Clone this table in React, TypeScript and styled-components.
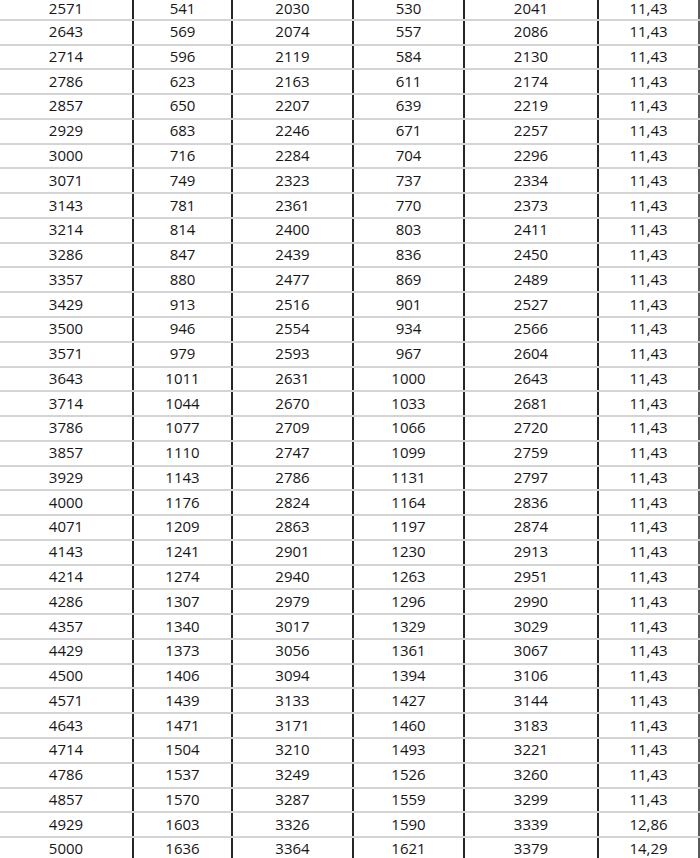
import React from "react";
import styled, { createGlobalStyle } from "styled-components";

const GlobalStyle = createGlobalStyle`
  html, body {
    margin: 0;
    padding: 0;
    background: #ffffff;
    overflow: hidden;
  }
  body {
    font-family: "Open Sans", "Noto Sans", "Liberation Sans", sans-serif;
  }
`;

const col1 = [2571, 2643, 2714, 2786, 2857, 2929, 3000, 3071, 3143, 3214, 3286, 3357, 3429, 3500, 3571, 3643, 3714, 3786, 3857, 3929, 4000, 4071, 4143, 4214, 4286, 4357, 4429, 4500, 4571, 4643, 4714, 4786, 4857, 4929, 5000];
const col2 = [541, 569, 596, 623, 650, 683, 716, 749, 781, 814, 847, 880, 913, 946, 979, 1011, 1044, 1077, 1110, 1143, 1176, 1209, 1241, 1274, 1307, 1340, 1373, 1406, 1439, 1471, 1504, 1537, 1570, 1603, 1636];
const col3 = [2030, 2074, 2119, 2163, 2207, 2246, 2284, 2323, 2361, 2400, 2439, 2477, 2516, 2554, 2593, 2631, 2670, 2709, 2747, 2786, 2824, 2863, 2901, 2940, 2979, 3017, 3056, 3094, 3133, 3171, 3210, 3249, 3287, 3326, 3364];
const col4 = [530, 557, 584, 611, 639, 671, 704, 737, 770, 803, 836, 869, 901, 934, 967, 1000, 1033, 1066, 1099, 1131, 1164, 1197, 1230, 1263, 1296, 1329, 1361, 1394, 1427, 1460, 1493, 1526, 1559, 1590, 1621];
const col5 = [2041, 2086, 2130, 2174, 2219, 2257, 2296, 2334, 2373, 2411, 2450, 2489, 2527, 2566, 2604, 2643, 2681, 2720, 2759, 2797, 2836, 2874, 2913, 2951, 2990, 3029, 3067, 3106, 3144, 3183, 3221, 3260, 3299, 3339, 3379];
const col6 = col1.map((_, i) => (i === 33 ? "12,86" : i === 34 ? "14,29" : "11,43"));

const rows = col1.map((_, i) => [
  String(col1[i]),
  String(col2[i]),
  String(col3[i]),
  String(col4[i]),
  String(col5[i]),
  col6[i],
]);

const Sheet = styled.div`
  display: flex;
  flex-direction: column;
  width: 700px;
`;

const Row = styled.div<{ $first?: boolean }>`
  display: grid;
  grid-template-columns: 134px 99px 121px 111px 134px 101px;
  height: ${(p) => (p.$first ? "20.8px" : "24.78px")};
  box-sizing: border-box;
  border-bottom: 2px solid #d4d4d4;
  flex: none;
`;

const Cell = styled.div<{ $last?: boolean }>`
  display: flex;
  align-items: center;
  justify-content: center;
  padding-bottom: 1px;
  box-sizing: border-box;
  border-right: 2px solid ${(p) => (p.$last ? "#5a5a5a" : "#262626")};
  font-size: 15px;
  color: #161616;
  line-height: 1;
  white-space: nowrap;
`;

export default function App() {
  return (
    <>
      <GlobalStyle />
      <Sheet>
        {rows.map((r, i) => (
          <Row key={i} $first={i === 0}>
            {r.map((v, j) => (
              <Cell key={j} $last={j === 5}>
                {v}
              </Cell>
            ))}
          </Row>
        ))}
      </Sheet>
    </>
  );
}
